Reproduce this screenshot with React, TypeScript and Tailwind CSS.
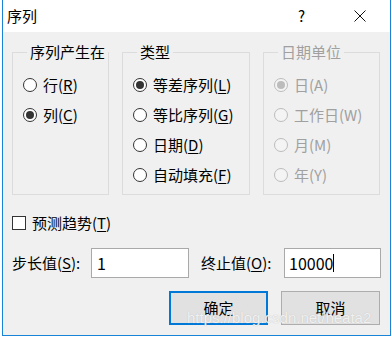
import React from 'react';

const FONT = { fontFamily: '"Microsoft YaHei UI", "Noto Sans CJK SC", "Noto Sans", sans-serif' };

function Radio({ checked, disabled, label, u }: { checked?: boolean; disabled?: boolean; label: string; u: string }) {
  const ring = disabled ? 'border-[#bcbcbc] bg-[#f4f4f4]' : 'border-[#333333] bg-white';
  const dot = disabled ? 'bg-[#bcbcbc]' : 'bg-[#333333]';
  return (
    <div className="flex items-center h-[30px]">
      <span className={`shrink-0 w-[14px] h-[14px] rounded-full border flex items-center justify-center ${ring}`}>
        {checked && <span className={`w-[8px] h-[8px] rounded-full ${dot}`} />}
      </span>
      <span className={`ml-[6px] text-[15px] leading-[20px] ${disabled ? 'text-[#a0a0a0]' : 'text-black'}`}>
        {label}(
        {disabled ? u : <span className="underline underline-offset-2">{u}</span>})
      </span>
    </div>
  );
}

function Group({ title, w, disabled, children }: { title: string; w: string; disabled?: boolean; children: React.ReactNode }) {
  return (
    <fieldset className={`border border-[#dcdcdc] h-[153px] pl-[10px] pt-[8px] ${w}`}>
      <legend className={`ml-[4px] px-[3px] text-[15px] leading-[20px] ${disabled ? 'text-[#a0a0a0]' : 'text-black'}`}>{title}</legend>
      {children}
    </fieldset>
  );
}

export default function App() {
  return (
    <div className="w-[392px] h-[339px] bg-white pl-[2px] overflow-hidden" style={FONT}>
      <div className="w-[389px] h-[336px] border-x border-b border-[#1883d7] bg-[#f0f0f0] flex flex-col">
        {/* 标题栏 */}
        <div className="h-[32px] bg-white flex items-center pl-[4px] text-black shrink-0">
          <span className="text-[15px] leading-[20px]">序列</span>
          <span className="ml-auto text-[15px] leading-[20px] mr-[49px]">?</span>
          <svg width="12" height="12" viewBox="0 0 12 12" className="mr-[24px]">
            <path d="M0.5 0.5 L11.5 11.5 M11.5 0.5 L0.5 11.5" stroke="#111" strokeWidth="1" />
          </svg>
        </div>

        <div className="relative flex-1 pl-[9px] pt-[10px]">
          <div className="flex gap-[13px]">
            <Group title="序列产生在" w="w-[97px]">
              <Radio label="行" u="R" />
              <Radio label="列" u="C" checked />
            </Group>
            <Group title="类型" w="w-[128px]">
              <Radio label="等差序列" u="L" checked />
              <Radio label="等比序列" u="G" />
              <Radio label="日期" u="D" />
              <Radio label="自动填充" u="F" />
            </Group>
            <Group title="日期单位" w="w-[117px]" disabled>
              <Radio label="日" u="A" disabled checked />
              <Radio label="工作日" u="W" disabled />
              <Radio label="月" u="M" disabled />
              <Radio label="年" u="Y" disabled />
            </Group>
          </div>

          <div className="flex items-center h-[20px] mt-[18px]">
            <span className="w-[14px] h-[14px] border border-[#333333] bg-white" />
            <span className="ml-[6px] text-[15px] leading-[20px]">
              预测趋势(<span className="underline underline-offset-2">T</span>)
            </span>
          </div>

          <div className="flex items-center mt-[15px] h-[30px]">
            <span className="w-[79px] text-[15px] leading-[20px]">
              步长值(<span className="underline underline-offset-2">S</span>):
            </span>
            <div className="w-[98px] h-[30px] border border-[#a9a9a9] bg-white flex items-center pl-[5px] text-[16px]">1</div>
            <span className="ml-[12px] w-[83px] text-[15px] leading-[20px]">
              终止值(<span className="underline underline-offset-2">O</span>):
            </span>
            <div className="w-[97px] h-[30px] border border-[#a9a9a9] bg-white flex items-center pl-[4px] text-[16px]">
              10000<span className="w-px h-[18px] bg-black" />
            </div>
          </div>

          <div className="flex mt-[13px] pl-[157px] gap-[13px]">
            <button className="w-[99px] h-[34px] border-2 border-[#0078d7] bg-[#e1e1e1] text-[15px] leading-[20px]">确定</button>
            <button className="w-[99px] h-[34px] border border-[#adadad] bg-[#e1e1e1] text-[15px] leading-[20px]">取消</button>
          </div>

          {/* 水印 */}
          <div
            className="absolute left-[184px] top-[277px] text-[15px] leading-[18px] text-white/80 whitespace-nowrap pointer-events-none"
            style={{ fontFamily: '"Liberation Sans", Arial, sans-serif', textShadow: '0 0 1px #b0b0b0' }}
          >
            https://blog.csdn.net/heata2
          </div>
        </div>
      </div>
    </div>
  );
}
